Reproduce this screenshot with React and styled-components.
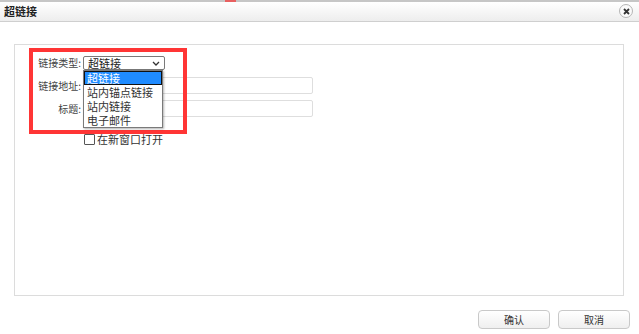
import React from "react";
import styled, { createGlobalStyle } from "styled-components";

const GlobalStyle = createGlobalStyle`
  html, body {
    margin: 0;
    padding: 0;
    background: #fff;
  }
  body {
    font-family: "Noto Sans CJK SC", "Noto Sans", sans-serif;
    color: #333;
    width: 639px;
    height: 334px;
    overflow: hidden;
  }
`;

const linkTypes = ["超链接", "站内锚点链接", "站内链接", "电子邮件"];

const TopStrip = styled.div`
  height: 2px;
  background: #c6c6c6;
  display: flex;
`;

const RedMark = styled.div`
  margin-left: 225px;
  width: 11px;
  background: #e86060;
`;

const TitleBar = styled.div`
  height: 19px;
  display: flex;
  align-items: center;
  justify-content: space-between;
  padding: 0 6px 0 4px;
  background: linear-gradient(#ffffff, #ededed);
  border-bottom: 1px solid #cfcfcf;
`;

const Title = styled.span`
  font-size: 11px;
  font-weight: bold;
  color: #222;
  line-height: 1;
`;

const CloseBtn = styled.span`
  width: 12px;
  height: 12px;
  border: 1px solid #b5b5b5;
  border-radius: 50%;
  background: #fafafa;
  display: flex;
  align-items: center;
  justify-content: center;
  margin-top: -1px;
`;

const Body = styled.div`
  padding: 22px 15px 0 14px;
`;

const Panel = styled.div`
  position: relative;
  height: 239px;
  border: 1px solid #dcdcdc;
  padding-top: 11px;
`;

const Row = styled.div`
  display: flex;
  align-items: center;
  margin-top: ${(p) => p.gap || 0}px;
  height: ${(p) => p.h}px;
`;

const Label = styled.label`
  width: 66px;
  padding-right: 2px;
  text-align: right;
  font-size: 10px;
  color: #444;
  line-height: 1;
`;

const SelectBox = styled.div`
  position: relative;
  height: 12px;
  width: 72px;
  border: 1px solid #7a7a7a;
  border-radius: 2px;
  display: flex;
  align-items: center;
  justify-content: space-between;
  padding: 0 4px;
  font-size: 11px;
  color: #222;
`;

const DropList = styled.ul`
  position: absolute;
  left: -1px;
  top: 13px;
  width: 78px;
  margin: 0;
  padding: 0;
  list-style: none;
  background: #fff;
  border: 1px solid #7a7a7a;
  box-shadow: 1px 1px 2px rgba(0, 0, 0, 0.3);
  z-index: 2;
`;

const DropItem = styled.li`
  height: 14px;
  line-height: 14px;
  font-size: 11px;
  padding-left: 3px;
  color: ${(p) => (p.active ? "#fff" : "#333")};
  background: ${(p) => (p.active ? "#1f8bff" : "transparent")};
  outline: ${(p) => (p.active ? "1px solid #111" : "none")};
  outline-offset: -1px;
`;

const Input = styled.div`
  width: 228px;
  height: 15px;
  border: 1px solid #dedede;
  border-radius: 2px;
`;

const Check = styled.span`
  width: 9px;
  height: 9px;
  border: 1px solid #555;
  border-radius: 1px;
  margin-left: 69px;
  margin-right: 2px;
`;

const CheckText = styled.span`
  font-size: 11px;
  color: #333;
`;

const Highlight = styled.div`
  position: absolute;
  left: 14px;
  top: 3px;
  width: 150px;
  height: 78px;
  border: 4px solid #ff3535;
  pointer-events: none;
`;

const Footer = styled.div`
  display: flex;
  justify-content: flex-end;
  gap: 8px;
  padding-top: 14px;
  margin-right: -6px;
`;

const Button = styled.button`
  width: 72px;
  height: 19px;
  border: 1px solid #c9c9c9;
  border-radius: 4px;
  background: linear-gradient(#ffffff, #efefef);
  font-family: inherit;
  font-size: 10px;
  line-height: 1;
  color: #333;
  padding: 0;
`;

export default function App() {
  return (
    <>
      <GlobalStyle />
      <TopStrip>
        <RedMark />
      </TopStrip>
      <TitleBar>
        <Title>超链接</Title>
        <CloseBtn>
          <svg width="7" height="7" viewBox="0 0 7 7">
            <path d="M1 1L6 6M6 1L1 6" stroke="#333" strokeWidth="1.8" />
          </svg>
        </CloseBtn>
      </TitleBar>
      <Body>
        <Panel>
          <Row h={14}>
            <Label>链接类型:</Label>
            <SelectBox>
              <span>超链接</span>
              <svg width="8" height="5" viewBox="0 0 8 5">
                <path d="M1 1L4 4L7 1" stroke="#333" strokeWidth="1.3" fill="none" />
              </svg>
              <DropList>
                {linkTypes.map((t, i) => (
                  <DropItem key={t} active={i === 0}>
                    {t}
                  </DropItem>
                ))}
              </DropList>
            </SelectBox>
          </Row>
          <Row h={17} gap={7}>
            <Label>链接地址:</Label>
            <Input />
          </Row>
          <Row h={17} gap={6}>
            <Label>标题:</Label>
            <Input />
          </Row>
          <Row h={12} gap={16}>
            <Check />
            <CheckText>在新窗口打开</CheckText>
          </Row>
          <Highlight />
        </Panel>
        <Footer>
          <Button>确认</Button>
          <Button>取消</Button>
        </Footer>
      </Body>
    </>
  );
}
